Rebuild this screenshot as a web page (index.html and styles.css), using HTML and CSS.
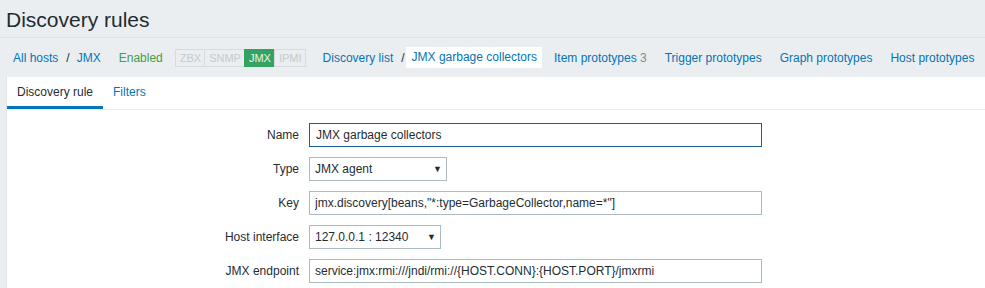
FILE: index.html
```html
<!DOCTYPE html>
<html lang="en">
<head>
  <meta charset="UTF-8">
  <title>Discovery rules</title>
  <link rel="stylesheet" href="styles.css">
</head>
<body>
  <div class="header">
    <h1>Discovery rules</h1>
  </div>

  <div class="breadcrumbs">
    <a href="#" class="crumb">All hosts</a>
    <span class="sep">/</span>
    <a href="#" class="crumb">JMX</a>
    <span class="status-enabled">Enabled</span>
    <div class="status-box">
      <span class="tag">ZBX</span>
      <span class="tag">SNMP</span>
      <span class="tag tag-on">JMX</span>
      <span class="tag">IPMI</span>
    </div>
    <a href="#" class="crumb">Discovery list</a>
    <span class="sep sep-tight">/</span>
    <span class="crumb-selected">JMX garbage collectors</span>
    <a href="#" class="crumb nav-item">Item prototypes <span class="count">3</span></a>
    <a href="#" class="crumb nav-item">Trigger prototypes</a>
    <a href="#" class="crumb nav-item">Graph prototypes</a>
    <a href="#" class="crumb nav-item">Host prototypes</a>
  </div>

  <div class="panel">
    <div class="tabs">
      <a href="#" class="tab tab-active">Discovery rule</a>
      <a href="#" class="tab">Filters</a>
    </div>

    <!-- Formular -->
    <div class="form">
      <label class="form-label">Name</label>
      <div><input type="text" class="input input-wide input-focus" value="JMX garbage collectors"></div>

      <label class="form-label">Type</label>
      <div><div class="select select-type">JMX agent<span class="arrow">▼</span></div></div>

      <label class="form-label">Key</label>
      <div><input type="text" class="input input-wide" value='jmx.discovery[beans,"*:type=GarbageCollector,name=*"]'></div>

      <label class="form-label">Host interface</label>
      <div><div class="select select-host">127.0.0.1 : 12340<span class="arrow">▼</span></div></div>

      <label class="form-label">JMX endpoint</label>
      <div><input type="text" class="input input-wide" value="service:jmx:rmi:///jndi/rmi://{HOST.CONN}:{HOST.PORT}/jmxrmi"></div>
    </div>
  </div>
</body>
</html>
```

FILE: styles.css
```css
body {
  margin: 0;
  background-color: #ebeef0;
  font-family: 'Liberation Sans', Arial, sans-serif;
  font-size: 12px;
  color: #1f2c33;
  overflow: hidden;
}

a {
  text-decoration: none;
}

.header {
  height: 38px;
  border-bottom: 1px solid #dfe4e7;
  padding-left: 6px;
  box-sizing: border-box;
}

.header h1 {
  margin: 0;
  padding-top: 8px;
  font-size: 21px;
  font-weight: normal;
  line-height: 24px;
  color: #1f2c33;
}

.breadcrumbs {
  display: flex;
  align-items: center;
  height: 39px;
  padding-left: 13px;
  white-space: nowrap;
}

.crumb {
  color: #0275b8;
}

.sep {
  margin: 0 7px 0 8px;
  color: #1f2c33;
}

.sep-tight {
  margin: 0 1px 0 8px;
}

.status-enabled {
  color: #429e47;
  margin-left: 18px;
  margin-right: 13px;
}

.status-box {
  display: flex;
  margin-right: 17px;
}

.tag {
  display: inline-block;
  height: 16px;
  line-height: 16px;
  padding: 0 3px 0 4px;
  font-size: 11px;
  color: #c2cbd0;
  background-color: #ebeef0;
  border: 1px solid #d5dbde;
  margin-left: -1px;
}

.tag-on {
  background-color: #34a35f;
  border-color: #34a35f;
  color: #e8f5ec;
}

.crumb-selected {
  background-color: #fff;
  color: #0275b8;
  padding: 4px 5px 4px 6px;
  line-height: 13px;
}

.nav-item {
  margin-left: 12px;
}

.nav-item + .nav-item {
  margin-left: 18px;
}

.count {
  color: #768d99;
}

.panel {
  margin-left: 6px;
  width: 1100px;
  background-color: #fff;
  border-left: 1px solid #dfe4e7;
  min-height: 220px;
}

.tabs {
  display: flex;
  height: 32px;
  border-bottom: 1px solid #ebeef0;
}

.tab {
  padding: 0 10px;
  line-height: 30px;
  color: #0275b8;
  border-bottom: 3px solid transparent;
}

.tab-active {
  color: #1f2c33;
  border-bottom-color: #0275b8;
}

.form {
  display: grid;
  grid-template-columns: 292px 1fr;
  column-gap: 10px;
  row-gap: 10px;
  padding-top: 13px;
  align-items: center;
}

.form-label {
  text-align: right;
}

.input {
  display: block;
  height: 24px;
  box-sizing: border-box;
  padding: 0 5px;
  border: 1px solid #acbbc2;
  font-family: inherit;
  font-size: 12px;
  color: #1f2c33;
  background: #fff;
  outline: none;
}

.input-wide {
  width: 453px;
}

.input-focus {
  border-color: #1f5e92;
  padding-left: 6px;
}

.select {
  position: relative;
  height: 24px;
  line-height: 22px;
  box-sizing: border-box;
  padding: 0 5px;
  border: 1px solid #acbbc2;
}

.select-type {
  width: 138px;
}

.select-host {
  width: 132px;
}

.arrow {
  position: absolute;
  right: 4px;
  top: 0;
  font-size: 9px;
}
```
